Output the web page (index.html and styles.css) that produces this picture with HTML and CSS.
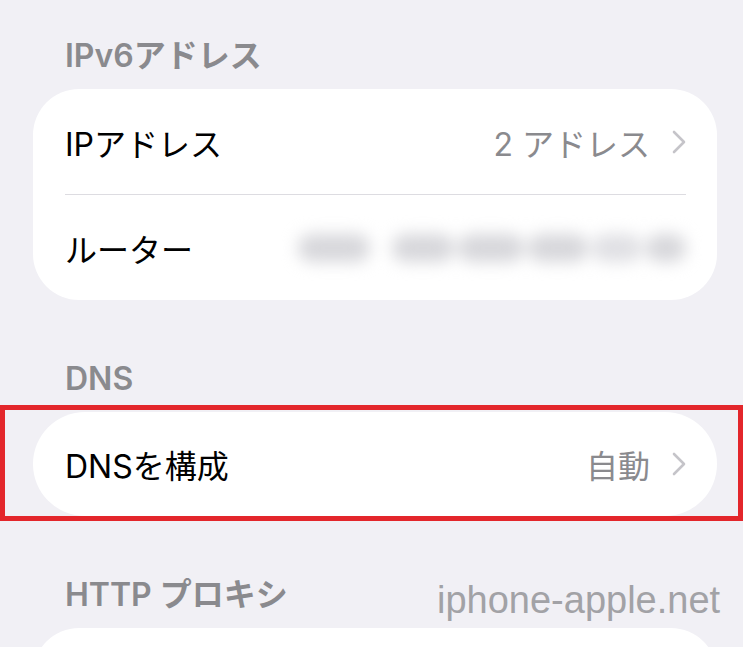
FILE: index.html
```html
<!DOCTYPE html>
<html lang="ja">
<head>
<meta charset="UTF-8">
<title>IPv6 / DNS</title>
<link rel="stylesheet" href="styles.css">
</head>
<body>
<div class="page">
  <div class="group-title first">IPv6アドレス</div>
  <div class="card">
    <div class="row">
      <span class="label">IPアドレス</span>
      <span class="value">2 アドレス</span>
      <svg class="chevron" width="14" height="24" viewBox="0 0 14 24"><polyline points="2,2 12,12 2,22" /></svg>
    </div>
    <div class="sep"></div>
    <div class="row">
      <span class="label">ルーター</span>
      <div class="blurred">
        <i class="b1"></i><i class="b2"></i><i class="b3"></i><i class="b4"></i><i class="b5"></i><i class="b6"></i>
      </div>
    </div>
  </div>

  <div class="group-title">DNS</div>
  <div class="highlight">
    <div class="card pill">
      <div class="row">
        <span class="label">DNSを構成</span>
        <span class="value">自動</span>
        <svg class="chevron" width="14" height="24" viewBox="0 0 14 24"><polyline points="2,2 12,12 2,22" /></svg>
      </div>
    </div>
  </div>

  <div class="group-title">HTTP プロキシ</div>
  <div class="card tall"></div>
</div>
<div class="watermark">iphone-apple.net</div>
</body>
</html>
```

FILE: styles.css
```css
body {
  margin: 0;
  background-color: #f1f0f5;
  font-family: Inter, "Noto Sans CJK JP", sans-serif;
  height: 100vh;
  overflow: hidden;
  position: relative;
}
.page {
  padding-top: 36px;
}
.group-title {
  margin: 59px 26px 13px 33px;
  padding-left: 32px;
  height: 40px;
  line-height: 40px;
  font-size: 32px;
  font-weight: 600;
  color: #8a8a8e;
}
.group-title.first {
  margin-top: 0;
}
.card {
  margin: 0 26px 0 33px;
  background-color: #fff;
  border-radius: 46px;
}
.card.pill {
  border-radius: 52px;
}
.card.tall {
  height: 120px;
}
.row {
  display: flex;
  align-items: center;
  height: 105px;
  padding: 0 31px 0 32px;
  font-size: 32px;
}
.pill .row {
  height: 104px;
}
.label {
  flex: 1;
  color: #000;
}
.value {
  color: #8a8a8e;
}
.chevron {
  margin-left: 22px;
  fill: none;
  stroke: #c5c4c9;
  stroke-width: 2.6;
  stroke-linecap: round;
  stroke-linejoin: round;
}
.sep {
  height: 1px;
  margin: 0 31px 0 32px;
  background-color: #dddce1;
}
.highlight {
  position: relative;
}
.highlight::after {
  content: "";
  position: absolute;
  top: -7px;
  bottom: -5px;
  left: 0;
  right: 0;
  border: 5px solid #e3262b;
}

/* blurred router address */
.blurred {
  display: flex;
  align-items: center;
  gap: 4px;
  height: 50px;
  filter: blur(8px);
}
.blurred i {
  display: block;
  height: 28px;
  border-radius: 14px;
  background-color: #d7d7db;
}
.blurred .b1 { width: 72px; margin-right: 18px; }
.blurred .b2 { width: 62px; }
.blurred .b3 { width: 66px; }
.blurred .b4 { width: 60px; }
.blurred .b5 { width: 50px; background-color: #e0e0e4; }
.blurred .b6 { width: 40px; }

.watermark {
  position: absolute;
  top: 581px;
  left: 437px;
  font-family: "Liberation Sans", Arial, sans-serif;
  font-size: 38px;
  line-height: 38px;
  color: #a2a2a6;
}
```
